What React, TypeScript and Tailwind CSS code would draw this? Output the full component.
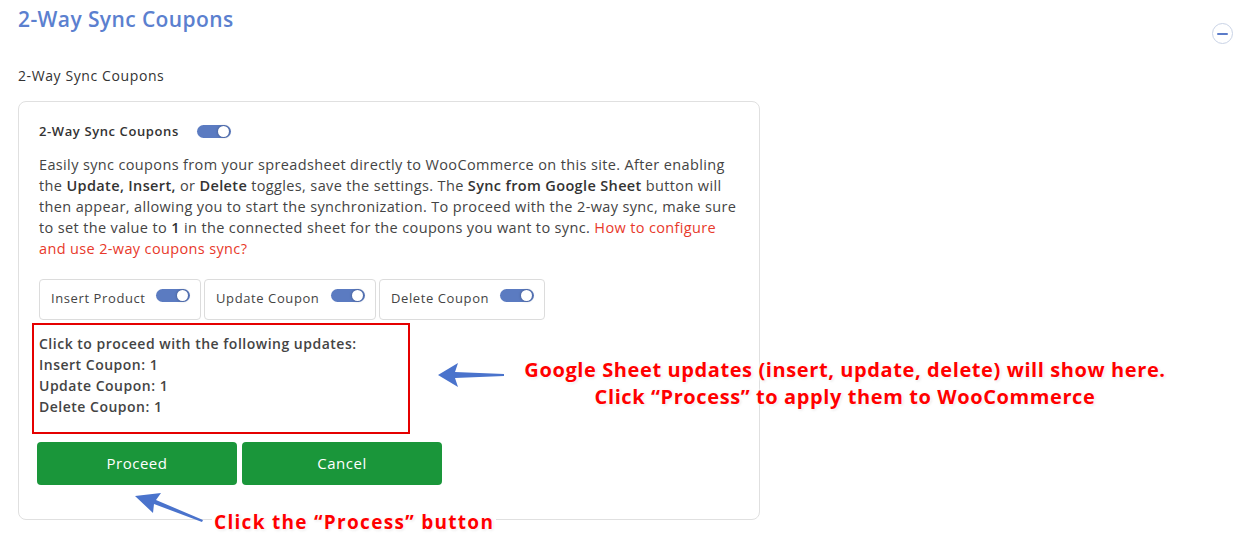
import React from "react";

function Toggle() {
  return (
    <span className="relative inline-block h-[13px] w-[34px] rounded-full bg-[#5b7bc1]">
      <span className="absolute right-[2px] top-[1px] h-[11px] w-[11px] rounded-full bg-white shadow-[0_0_3px_rgba(0,0,0,0.35)]" />
    </span>
  );
}

function ToggleBox({ label, width }: { label: string; width: string }) {
  return (
    <div
      className={`flex h-[41px] items-center justify-between rounded border border-[#dcdcdc] pl-[11px] pr-[10px] ${width}`}
    >
      <span className="text-[13px] tracking-[0.6px] text-[#444]">{label}</span>
      <span className="-mt-[6px]">
        <Toggle />
      </span>
    </div>
  );
}

function LeftArrow() {
  return (
    <svg width="68" height="28" viewBox="0 0 68 28">
      <polygon points="0,14 20,2 17,11 66,13 66,15 17,17 20,26" fill="#4a73cc" />
    </svg>
  );
}

function UpArrow() {
  return (
    <svg width="70" height="30" viewBox="0 0 70 30">
      <polygon points="0,3 26,0 21,7 68,27 67,29 19,11 18,20" fill="#4a73cc" />
    </svg>
  );
}

const halo =
  "[text-shadow:0_0_3px_#fff,0_0_3px_#fff,0_0_4px_#fff,1px_1px_3px_rgba(0,0,0,0.15)]";

export default function App() {
  return (
    <div className="relative h-[537px] w-[1260px] overflow-hidden bg-white font-['Open_Sans',sans-serif] text-[#333]">
      <div className="flex items-start justify-between pl-[18px] pr-[27px] pt-[5px]">
        <h1 className="text-[21px] font-semibold leading-[28px] tracking-[0.4px] text-[#5b80cf]">
          2-Way Sync Coupons
        </h1>
        <span className="mt-[18px] flex h-[21px] w-[21px] items-center justify-center rounded-full border border-[#c9d3e6]">
          <span className="h-[2px] w-[11px] rounded bg-[#5b7bc9]" />
        </span>
      </div>

      <p className="ml-[18px] mt-[21px] text-[14px] tracking-[0.6px] text-[#333]">2-Way Sync Coupons</p>

      <div className="ml-[18px] mt-[15px] h-[419px] w-[742px] rounded-lg border border-[#e0e0e0] pl-[20px] pr-[20px] pt-[20px]">
        <div className="flex items-center gap-[18px]">
          <span className="text-[13px] font-semibold tracking-[0.6px] text-[#333]">2-Way Sync Coupons</span>
          <Toggle />
        </div>

        <p className="mt-[12px] text-[14.5px] leading-[21px] tracking-[0.36px] text-[#444]">
          Easily sync coupons from your spreadsheet directly to WooCommerce on this site. After enabling
          the <b className="font-semibold text-[#333]">Update, Insert,</b> or{" "}
          <b className="font-semibold text-[#333]">Delete</b> toggles, save the settings. The{" "}
          <b className="font-semibold text-[#333]">Sync from Google Sheet</b> button will then appear,
          allowing you to start the synchronization. To proceed with the 2-way sync, make sure to set
          the value to <b className="font-semibold text-[#333]">1</b> in the connected sheet for the
          coupons you want to sync.{" "}
          <span className="text-[#e8392b]">How to configure and use 2-way coupons sync?</span>
        </p>

        <div className="mt-[20px] flex gap-[3px]">
          <ToggleBox label="Insert Product" width="w-[162px]" />
          <ToggleBox label="Update Coupon" width="w-[172px]" />
          <ToggleBox label="Delete Coupon" width="w-[166px]" />
        </div>

        <div className="-ml-[7px] mt-[3px] h-[111px] w-[378px] border-2 border-[#e50000] pl-[5px] pt-[8px] text-[14px] font-semibold leading-[21px] tracking-[0.5px] text-[#444]">
          <p>Click to proceed with the following updates:</p>
          <p>Insert Coupon: 1</p>
          <p>Update Coupon: 1</p>
          <p>Delete Coupon: 1</p>
        </div>

        <div className="-ml-[2px] mt-[8px] flex gap-[5px]">
          <button className="h-[43px] w-[200px] rounded bg-[#1a963a] text-[15px] tracking-[0.5px] text-white">
            Proceed
          </button>
          <button className="h-[43px] w-[200px] rounded bg-[#1a963a] text-[15px] tracking-[0.5px] text-white">
            Cancel
          </button>
        </div>
      </div>

      {/* annotations */}
      <div className="absolute left-[438px] top-[361px]">
        <LeftArrow />
      </div>
      <div
        className={`absolute left-[500px] top-[356px] w-[690px] text-center text-[20px] font-bold leading-[27px] tracking-[0.6px] text-[#ff0000] ${halo}`}
      >
        <p>Google Sheet updates (insert, update, delete) will show here.</p>
        <p>Click “Process” to apply them to WooCommerce</p>
      </div>

      <div className="absolute left-[135px] top-[493px]">
        <UpArrow />
      </div>
      <div
        className={`absolute left-[212px] top-[509px] bg-white px-[2px] text-[19px] font-bold leading-[26px] tracking-[1.3px] text-[#ff0000] ${halo}`}
      >
        Click the “Process” button
      </div>
    </div>
  );
}
